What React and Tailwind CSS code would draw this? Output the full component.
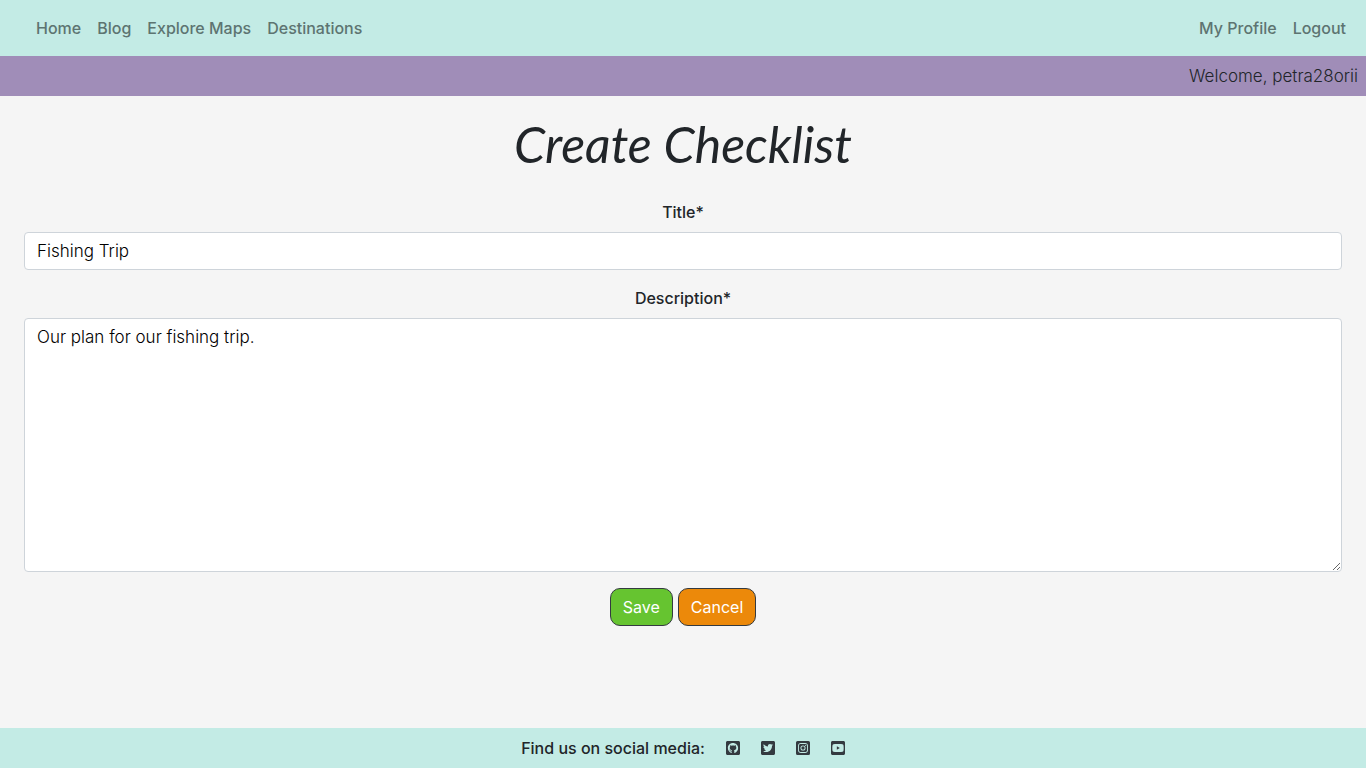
import React from "react";
import {
  FaGithubSquare,
  FaTwitterSquare,
  FaInstagramSquare,
  FaYoutubeSquare,
} from "react-icons/fa";

const mainLinks = ["Home", "Blog", "Explore Maps", "Destinations"];
const accountLinks = ["My Profile", "Logout"];
const socialLinks = [
  { name: "GitHub", Icon: FaGithubSquare },
  { name: "Twitter", Icon: FaTwitterSquare },
  { name: "Instagram", Icon: FaInstagramSquare },
  { name: "YouTube", Icon: FaYoutubeSquare },
];

function NavLinks({ items }) {
  return (
    <ul className="flex">
      {items.map((item) => (
        <li key={item}>
          <a href="#" className="block p-2 font-medium text-[#5d7471]">
            {item}
          </a>
        </li>
      ))}
    </ul>
  );
}

function Header() {
  return (
    <header>
      <nav className="flex h-14 items-center justify-between bg-[#c3ebe5] pl-7 pr-3">
        <NavLinks items={mainLinks} />
        <NavLinks items={accountLinks} />
      </nav>
      <p className="bg-[#a08db8] p-2 text-right text-[17px] leading-6 font-light">
        Welcome, petra28orii
      </p>
    </header>
  );
}

function ChecklistForm() {
  const field =
    "block w-full rounded border border-[#ced4da] bg-white px-3 py-1.5 text-[17px] leading-6 font-light text-black";
  const button =
    "h-[38px] rounded-[10px] border border-[#343a40] px-3 text-white";
  return (
    <form className="flex flex-col gap-4 px-6" onSubmit={(e) => e.preventDefault()}>
      <div>
        <label htmlFor="title" className="mb-2 block text-center font-medium">
          Title*
        </label>
        <input id="title" type="text" defaultValue="Fishing Trip" className={field} />
      </div>
      <div>
        <label htmlFor="description" className="mb-2 block text-center font-medium">
          Description*
        </label>
        <textarea
          id="description"
          rows={10}
          defaultValue="Our plan for our fishing trip."
          className={field}
        />
      </div>
      <div className="flex justify-center gap-[5px]">
        <button type="submit" className={`${button} bg-[#66c430]`}>
          Save
        </button>
        <button type="button" className={`${button} bg-[#ec890a]`}>
          Cancel
        </button>
      </div>
    </form>
  );
}

function Footer() {
  return (
    <footer className="flex h-10 items-center justify-center bg-[#c3ebe5]">
      <p className="mr-[21px] font-medium">Find us on social media:</p>
      <ul className="flex gap-[21px]">
        {socialLinks.map(({ name, Icon }) => (
          <li key={name}>
            <a href="#" aria-label={name} className="block text-[#343a40]">
              <Icon className="h-4 w-[14px]" />
            </a>
          </li>
        ))}
      </ul>
    </footer>
  );
}

export default function App() {
  return (
    <div className="flex min-h-screen flex-col bg-[#f5f5f5] font-['Inter',sans-serif] text-base text-[#212529]">
      <Header />
      <main className="grow">
        <h1 className="pt-3 pb-5 text-center font-['Lato',cursive] text-[50px] leading-[72px] font-normal italic">
          Create Checklist
        </h1>
        <ChecklistForm />
      </main>
      <Footer />
    </div>
  );
}
